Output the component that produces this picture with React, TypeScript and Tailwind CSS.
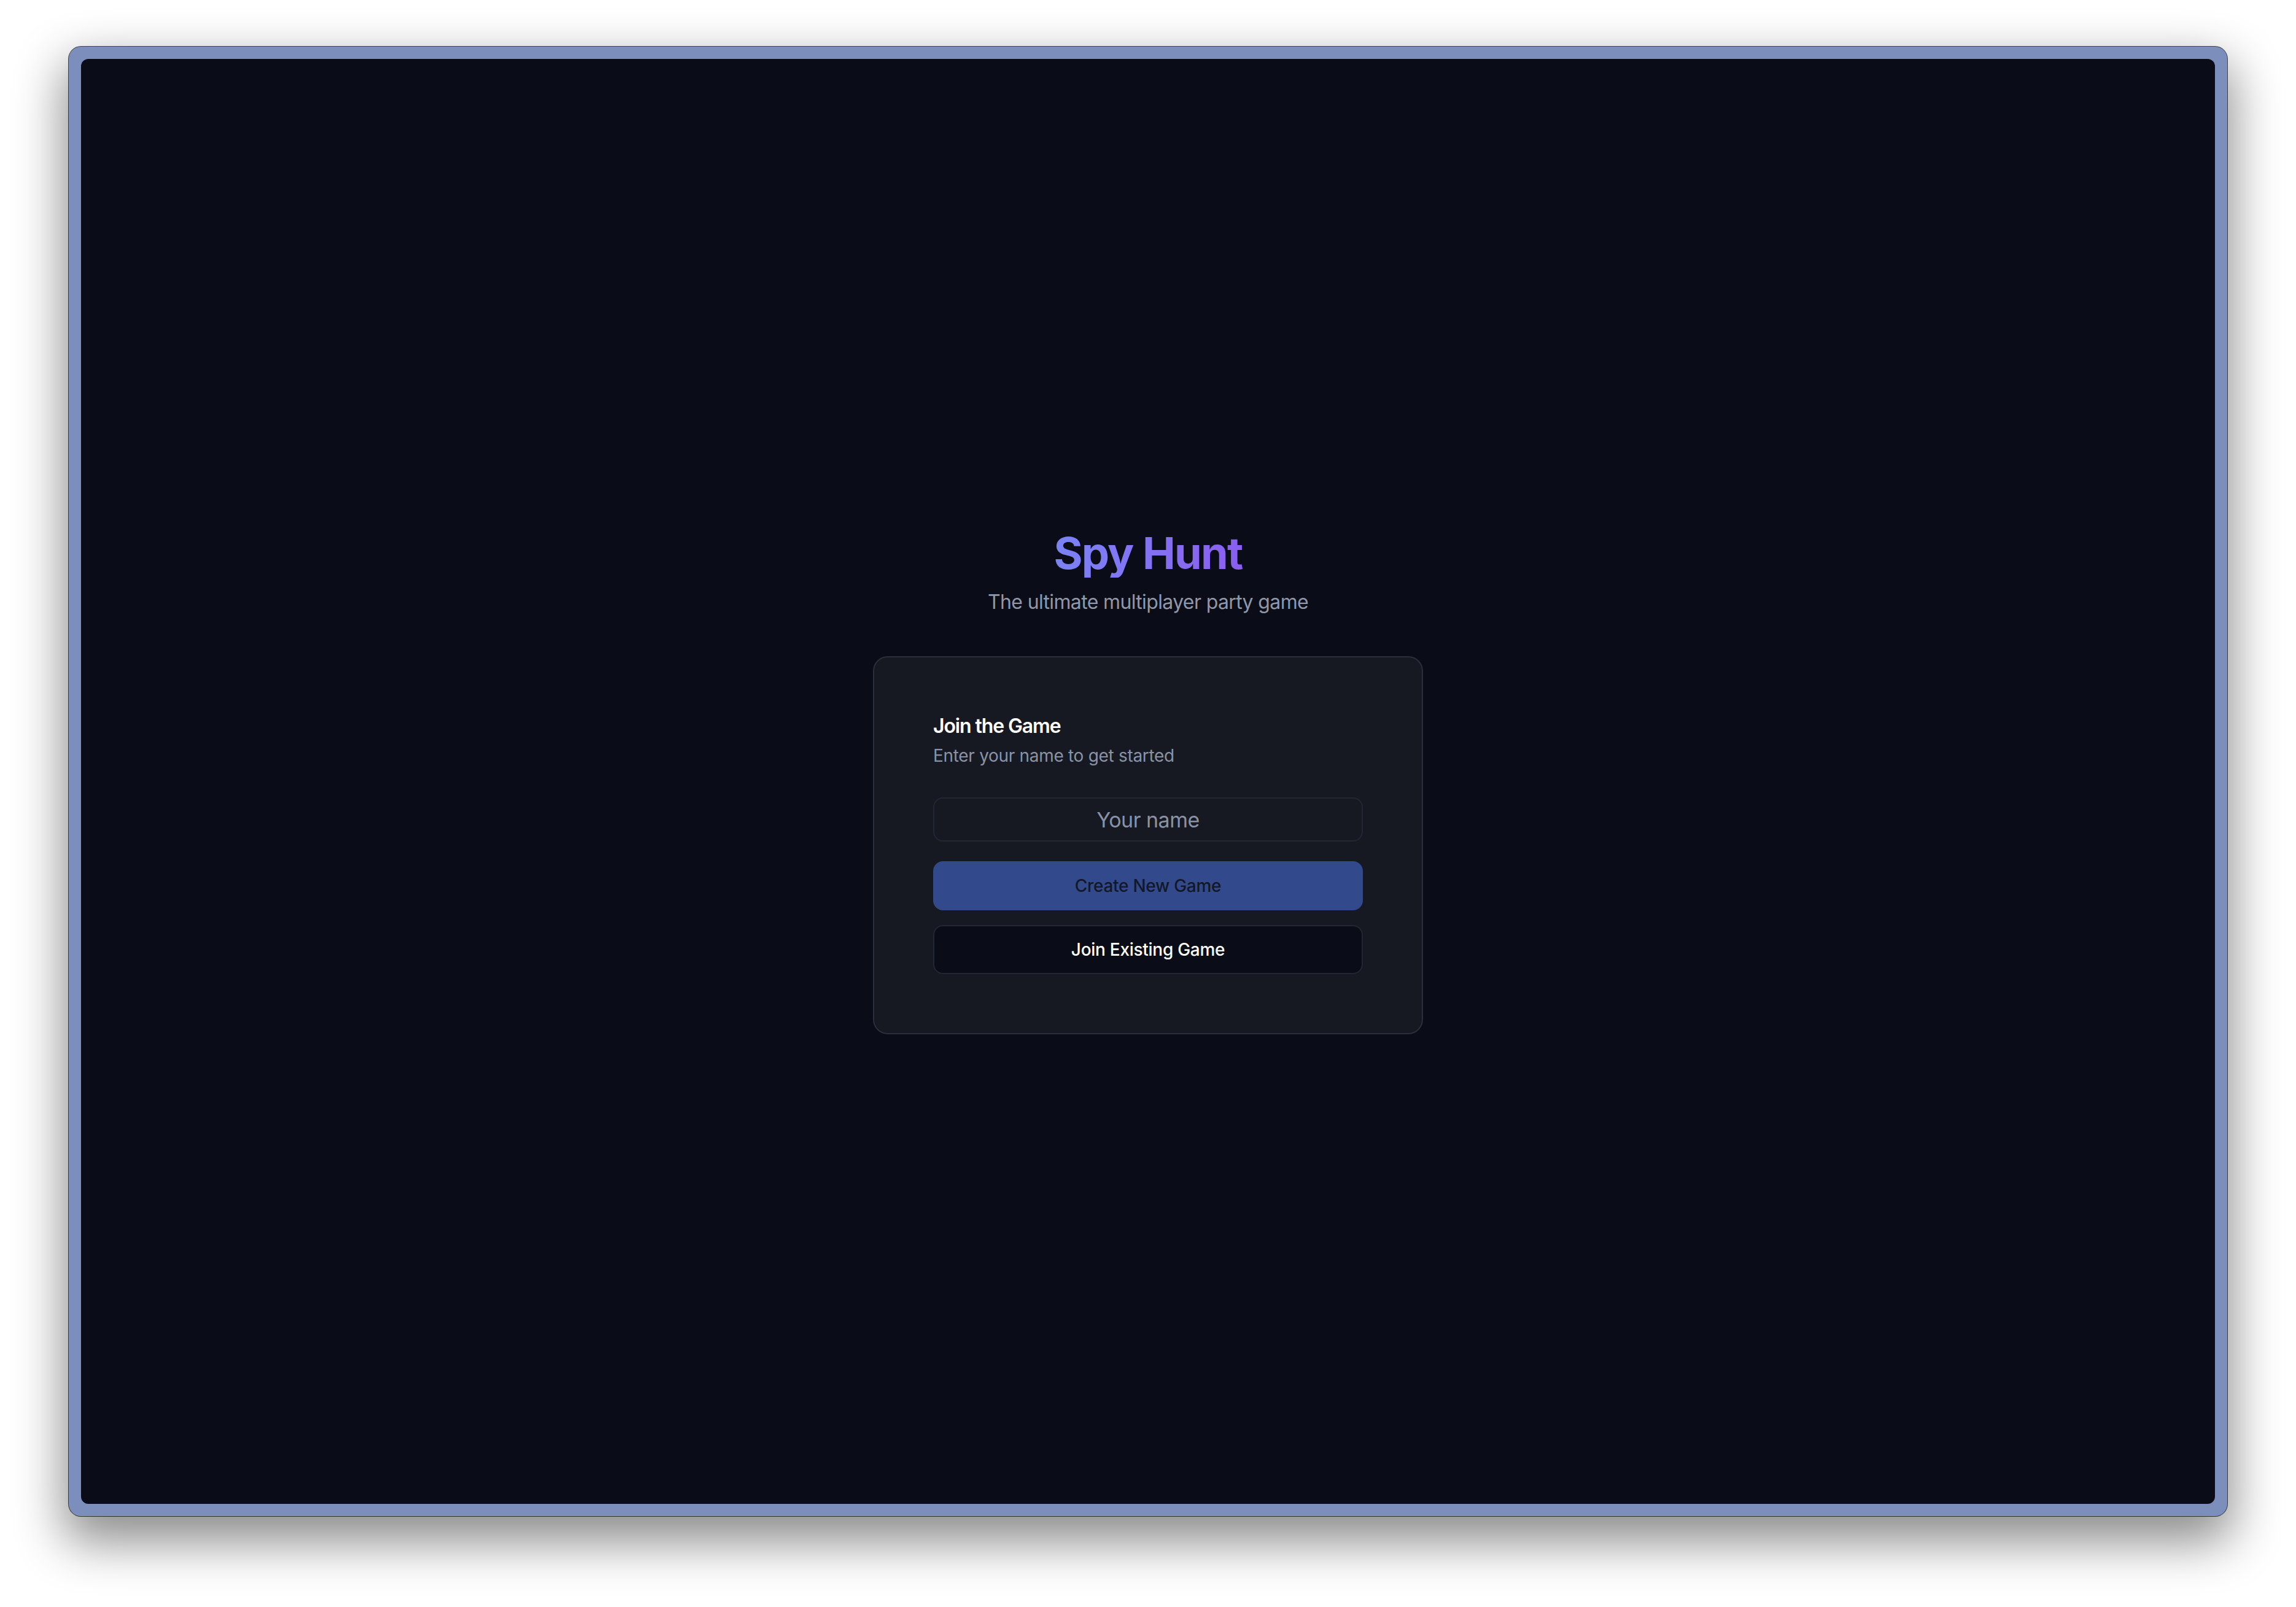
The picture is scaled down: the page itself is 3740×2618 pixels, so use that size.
import { useState } from 'react';

export default function App() {
  const [name, setName] = useState('');

  return (
    <div className="min-h-screen w-full bg-white flex px-[112px] pt-[76px] pb-[148px] font-['Inter',sans-serif]">
      <div className="flex-1 flex rounded-[20px] bg-[#7b8ebc] p-[20px] ring-1 ring-black/70 shadow-[0_34px_80px_8px_rgba(0,0,0,0.45)]">
        <main className="flex-1 flex items-center justify-center rounded-[12px] bg-[#0a0d17]">
          <div className="flex flex-col items-center">
            <h1 className="text-[72px] leading-[80px] font-bold tracking-[-0.025em] bg-gradient-to-r from-[#7a83f5] to-[#8a5ef0] bg-clip-text text-transparent">
              Spy Hunt
            </h1>
            <p className="mt-4 text-[32px] leading-[48px] tracking-[-0.02em] text-[#8f97a9]">
              The ultimate multiplayer party game
            </p>

            <div className="mt-16 w-[896px] rounded-[24px] border-2 border-[#2b2f3b] bg-[#161922] p-24 flex flex-col">
              <h2 className="text-[32px] leading-[32px] font-semibold tracking-[-0.035em] text-white">Join the Game</h2>
              <p className="mt-3 text-[28px] leading-[40px] tracking-[-0.011em] text-[#8a93a6]">
                Enter your name to get started
              </p>

              <input
                value={name}
                onChange={e => setName(e.target.value)}
                placeholder="Your name"
                className="mt-12 h-[72px] w-full rounded-[16px] border-2 border-[#232733] bg-transparent px-6 text-center text-[34px] tracking-[-0.015em] text-white placeholder:text-[#8a92a6] outline-none"
              />

              <button className="mt-8 h-[80px] w-full rounded-[16px] bg-[#324a8b] text-[28px] font-medium tracking-[-0.01em] text-[#121828]">
                Create New Game
              </button>
              <button className="mt-6 h-[80px] w-full rounded-[16px] border-2 border-[#232733] bg-[#0a0d17] text-[28px] font-medium tracking-[-0.01em] text-white">
                Join Existing Game
              </button>
            </div>
          </div>
        </main>
      </div>
    </div>
  );
}
